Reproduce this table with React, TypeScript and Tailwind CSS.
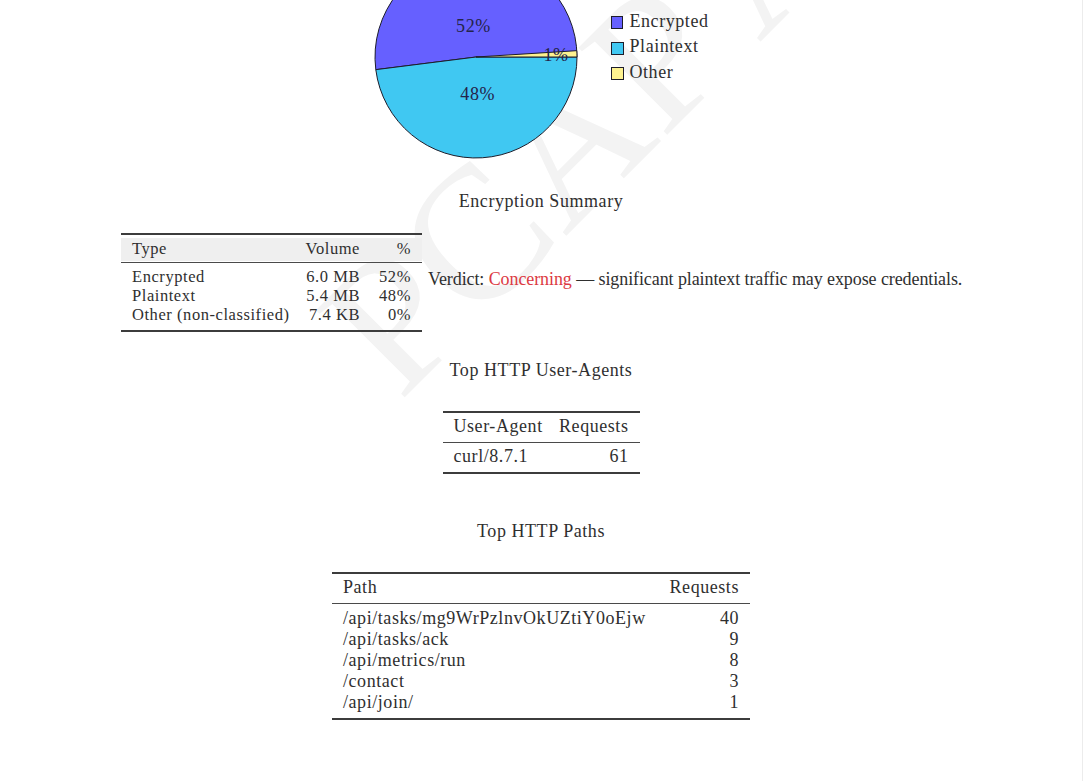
const TEXT = "text-[#2f2f2f]";

function Watermark() {
  return (
    <svg className="absolute inset-0 pointer-events-none" width="1083" height="781">
      <text
        x="400"
        y="402"
        transform="rotate(-45 400 402)"
        fontSize="190"
        fill="#f3f3f3"
        fontFamily="'Liberation Serif', serif"
      >
        PCAP ANALYSIS
      </text>
    </svg>
  );
}

function Pie() {
  const stroke = "#1d1d2b";
  return (
    <svg width="204" height="204" viewBox="0 0 204 204" className="shrink-0">
      <path d="M102 102 L203 102 A101 101 0 1 0 1.8 114.66 Z" fill="#6660ff" stroke={stroke} strokeWidth="1" strokeLinejoin="round" />
      <path d="M102 102 L1.8 114.66 A101 101 0 0 0 203 102 Z" fill="#40c8f2" stroke={stroke} strokeWidth="1" strokeLinejoin="round" />
      <path d="M102 102 L203 102 A101 101 0 0 0 202.8 95.66 Z" fill="#fdf290" stroke={stroke} strokeWidth="1" strokeLinejoin="round" />
      <g fontFamily="'Liberation Serif', serif" fontSize="18" fill="#24244a" textAnchor="middle" letterSpacing="0.6">
        <text x="99.5" y="77.3">52%</text>
        <text x="103.7" y="145">48%</text>
        <text x="182" y="106">1%</text>
      </g>
    </svg>
  );
}

const legend = [
  { label: "Encrypted", color: "bg-[#6660ff]" },
  { label: "Plaintext", color: "bg-[#40c8f2]" },
  { label: "Other", color: "bg-[#fdf290]" },
];

function Legend() {
  return (
    <div className="w-[98px] pt-[53.5px] flex flex-col">
      {legend.map((item) => (
        <div key={item.label} className="flex items-start gap-[6px] leading-[25.5px] whitespace-nowrap">
          <span className={`mt-[7.5px] w-[13px] h-[13px] border border-[#1d1d2b] ${item.color}`} />
          <span className="text-[18px]">{item.label}</span>
        </div>
      ))}
    </div>
  );
}

function Caption({ children, className = "" }: { children: React.ReactNode; className?: string }) {
  return <div className={`text-[18px] leading-[21px] text-center ${className}`}>{children}</div>;
}

const summary = [
  { type: "Encrypted", volume: "6.0 MB", pct: "52%" },
  { type: "Plaintext", volume: "5.4 MB", pct: "48%" },
  { type: "Other (non-classified)", volume: "7.4 KB", pct: "0%" },
];

function SummaryTable() {
  return (
    <div className="w-[301px] shrink-0 text-[16.5px] leading-[19px]">
      <div className="h-[2px] bg-[#3c3c3c]" />
      <div className="h-[3px]" />
      <div className="grid grid-cols-[170px_58px_51px] px-[11px] pt-[1px] pb-[3px] bg-[#efefef]">
        <span>Type</span>
        <span className="text-right">Volume</span>
        <span className="text-right">%</span>
      </div>
      <div className="h-px" />
      <div className="h-px bg-[#4a4a4a]" />
      <div className="pt-[4px] pb-[6px]">
        {summary.map((r) => (
          <div key={r.type} className="grid grid-cols-[170px_58px_51px] px-[11px] whitespace-nowrap">
            <span>{r.type}</span>
            <span className="text-right">{r.volume}</span>
            <span className="text-right">{r.pct}</span>
          </div>
        ))}
      </div>
      <div className="h-[2px] bg-[#3c3c3c]" />
    </div>
  );
}

function BookTable({
  width,
  head,
  rows,
  bodyPad,
}: {
  width: string;
  head: [string, string];
  rows: [string, string][];
  bodyPad: string;
}) {
  return (
    <div className={`${width} text-[18px] leading-[21px]`}>
      <div className="h-[2px] bg-[#3c3c3c]" />
      <div className="flex justify-between pl-[11px] pr-[11px] pt-[3px] pb-[5px]">
        <span>{head[0]}</span>
        <span>{head[1]}</span>
      </div>
      <div className="h-px bg-[#4a4a4a]" />
      <div className={bodyPad}>
        {rows.map(([a, b]) => (
          <div key={a} className="flex justify-between pl-[11px] pr-[11px]">
            <span>{a}</span>
            <span>{b}</span>
          </div>
        ))}
      </div>
      <div className="h-[2px] bg-[#3c3c3c]" />
    </div>
  );
}

export default function App() {
  return (
    <div className={`relative w-[1083px] h-[781px] overflow-hidden bg-white border-r border-[#ececec] font-['Liberation_Serif',serif] tracking-[0.035em] ${TEXT}`}>
      <Watermark />
      <div className="relative flex flex-col items-center">
        <div className="flex items-start gap-[33px] mt-[-45px]">
          <Pie />
          <Legend />
        </div>

        <Caption className="mt-[32px]">Encryption Summary</Caption>

        <div className="mt-[21px] flex items-start gap-[6px]">
          <SummaryTable />
          <div className="w-[533px] mt-[36px] text-[18px] leading-[21px] tracking-[-0.005em] whitespace-nowrap">
            Verdict: <span className="text-[#dc3a42]">Concerning</span> — significant plaintext traffic may expose credentials.
          </div>
        </div>

        <Caption className="mt-[28px]">Top HTTP User-Agents</Caption>
        <div className="mt-[30px]">
          <BookTable
            width="w-[197px]"
            head={["User-Agent", "Requests"]}
            rows={[["curl/8.7.1", "61"]]}
            bodyPad="pt-[3px] pb-[5px]"
          />
        </div>

        <Caption className="mt-[47px]">Top HTTP Paths</Caption>
        <div className="mt-[30px]">
          <BookTable
            width="w-[418px]"
            head={["Path", "Requests"]}
            rows={[
              ["/api/tasks/mg9WrPzlnvOkUZtiY0oEjw", "40"],
              ["/api/tasks/ack", "9"],
              ["/api/metrics/run", "8"],
              ["/contact", "3"],
              ["/api/join/", "1"],
            ]}
            bodyPad="pt-[4px] pb-[5px]"
          />
        </div>
      </div>
    </div>
  );
}
